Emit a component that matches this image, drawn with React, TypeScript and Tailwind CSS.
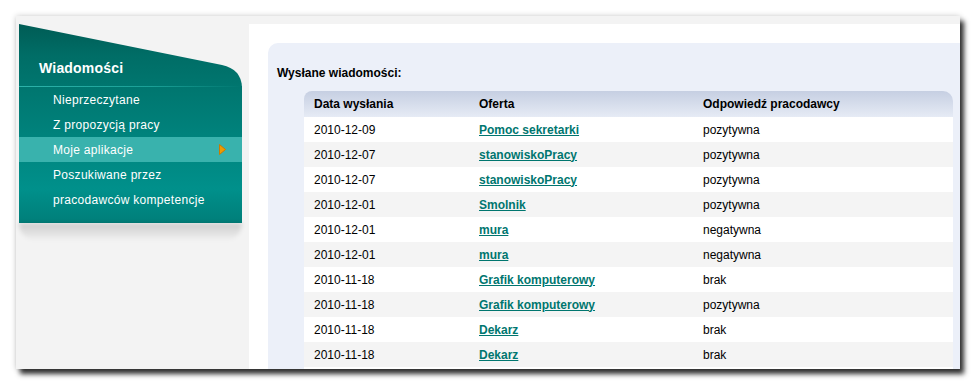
import React from "react";

const rows: [string, string, string][] = [
  ["2010-12-09", "Pomoc sekretarki", "pozytywna"],
  ["2010-12-07", "stanowiskoPracy", "pozytywna"],
  ["2010-12-07", "stanowiskoPracy", "pozytywna"],
  ["2010-12-01", "Smolnik", "pozytywna"],
  ["2010-12-01", "mura", "negatywna"],
  ["2010-12-01", "mura", "negatywna"],
  ["2010-11-18", "Grafik komputerowy", "brak"],
  ["2010-11-18", "Grafik komputerowy", "pozytywna"],
  ["2010-11-18", "Dekarz", "brak"],
  ["2010-11-18", "Dekarz", "brak"],
];

const menu = [
  { label: "Nieprzeczytane", active: false },
  { label: "Z propozycją pracy", active: false },
  { label: "Moje aplikacje", active: true },
  { label: "Poszukiwane przez", active: false },
  { label: "pracodawców kompetencje", active: false },
];

export default function App() {
  return (
    <div
      className="w-[977px] h-[387px] bg-white pt-4 pl-4 overflow-hidden"
      style={{ fontFamily: '"Liberation Sans", Arial, sans-serif' }}
    >
      <div className="w-[944px] h-[353px] bg-[#f3f3f3] overflow-hidden flex shadow-[4px_5px_5px_rgba(0,0,0,0.8),0_0_6px_rgba(0,0,0,0.2)]">
        {/* Sidebar */}
        <aside className="w-[233px] shrink-0 pt-2 pl-[3px]">
          <div className="w-[223px]">
            <div className="relative h-[63px]">
              <svg
                className="absolute inset-0"
                width="223"
                height="63"
                viewBox="0 0 223 63"
              >
                <defs>
                  <linearGradient id="hdr" x1="0" y1="0" x2="0" y2="1">
                    <stop offset="0" stopColor="#005c55" />
                    <stop offset="0.5" stopColor="#006d66" />
                    <stop offset="1" stopColor="#00766f" />
                  </linearGradient>
                  <linearGradient id="sep" x1="0" y1="0" x2="1" y2="0">
                    <stop offset="0" stopColor="#2db3aa" />
                    <stop offset="0.6" stopColor="#1a9f96" />
                    <stop offset="1" stopColor="#00766f" />
                  </linearGradient>
                </defs>
                <path
                  d="M0 0 L203 41 Q222 45 223 63 L0 63 Z"
                  fill="url(#hdr)"
                />
                <rect x="0" y="62" width="223" height="1" fill="url(#sep)" />
              </svg>
              <div className="absolute left-[20px] top-[36px] text-[14px] leading-[16px] font-bold text-white tracking-[0.2px]">
                Wiadomości
              </div>
            </div>
            <div className="bg-gradient-to-b from-[#00766f] via-[#00908b] via-75% to-[#007e79] pb-[11px]">
              {menu.map((m) => (
                <div
                  key={m.label}
                  className={`h-[25px] flex items-center pl-[34px] pr-[16px] text-[12px] text-white tracking-[0.3px] ${
                    m.active ? "bg-[#39b2ad]" : ""
                  }`}
                >
                  <span className="flex-1">{m.label}</span>
                  {m.active && (
                    <svg width="7" height="11" viewBox="0 0 7 11">
                      <path
                        d="M0.5 0.5 L6.5 5.5 L0.5 10.5 Z"
                        fill="#ef9b00"
                        stroke="#c97a00"
                        strokeWidth="1"
                      />
                    </svg>
                  )}
                </div>
              ))}
            </div>
            <div className="h-[18px] rounded-b-[60px] blur-[2px] bg-gradient-to-b from-[rgba(0,0,0,0.16)] to-[rgba(0,0,0,0)]" />
          </div>
        </aside>

        {/* Main content */}
        <main className="flex-1 bg-white mt-2 pt-[19px] pl-[19px] min-w-0">
          <div className="h-full bg-[#ecf0f9] rounded-tl-[10px] pl-[9px] pr-[7px] pt-[23px]">
            <div className="text-[12px] leading-[14px] font-bold text-black">
              Wysłane wiadomości:
            </div>
            <div className="ml-[27px] mt-[11px]">
              <div className="h-[26px] flex items-center rounded-tl-[8px] rounded-tr-[10px] bg-gradient-to-b from-[#c6cfe2] to-[#e6ebf5] text-[12px] font-bold text-black">
                <div className="w-[165px] pl-[10px]">Data wysłania</div>
                <div className="w-[224px] pl-[10px]">Oferta</div>
                <div className="flex-1 pl-[10px]">Odpowiedź pracodawcy</div>
              </div>
              {rows.map((r, i) => (
                <div
                  key={i}
                  className={`h-[25px] flex items-center text-[12px] text-black ${
                    i % 2 === 0 ? "bg-white" : "bg-[#f4f4f4]"
                  }`}
                >
                  <div className="w-[165px] pl-[10px]">{r[0]}</div>
                  <div className="w-[224px] pl-[10px]">
                    <a className="font-bold text-[#00766f] underline">{r[1]}</a>
                  </div>
                  <div className="flex-1 pl-[10px]">{r[2]}</div>
                </div>
              ))}
              <div className="h-[25px] bg-white" />
            </div>
          </div>
        </main>
      </div>
    </div>
  );
}
